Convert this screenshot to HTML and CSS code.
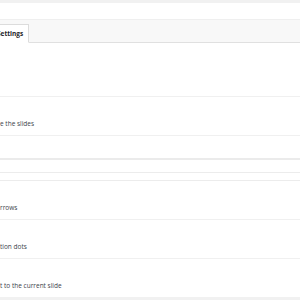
FILE: index.html
```
<!DOCTYPE html>
<html lang="en">
<head>
    <meta charset="UTF-8">
    <meta name="viewport" content="width=device-width, initial-scale=1.0">
    <title>Slider Settings</title>
    <link rel="stylesheet" href="styles.css">
</head>
<body>
    <div class="wrap">
        <div class="panel">
            <div class="panel-head"></div>

            <div class="tabs">
                <span class="tab active">Settings</span>
            </div>

            <div class="row row-tall"></div>

            <div class="row">
                <span class="label">e the slides</span>
            </div>

            <div class="row row-short"></div>

            <div class="section-gap"></div>
            <div class="section-head"></div>

            <div class="row">
                <span class="label">rrows</span>
            </div>

            <div class="row">
                <span class="label">tion dots</span>
            </div>

            <div class="row row-last">
                <span class="label">t to the current slide</span>
            </div>
        </div>
    </div>
</body>
</html>
```

FILE: styles.css
```
* {
    margin: 0;
    padding: 0;
    box-sizing: border-box;
}

body {
    font-family: "Open Sans", "Liberation Sans", sans-serif;
    font-size: 6.5px;
    line-height: 10px;
    color: #3c434a;
    background: #f1f1f1;
}

.wrap {
    height: 300px;
    padding-top: 3px;
    overflow: hidden;
}

.panel {
    background: #fff;
}

.panel-head {
    height: 16px;
}

.tabs {
    display: flex;
    align-items: flex-end;
    height: 24px;
    background: #f8f8f8;
    border-top: 1px solid #efefef;
    border-bottom: 1px solid #e0e0e0;
}

.tab {
    margin-left: -9px;
    margin-bottom: -1px;
    height: 19px;
    padding: 4px 5px 0 5px;
    font-weight: 700;
    color: #1d2327;
    background: #fff;
    border: 1px solid #dcdcdc;
    border-bottom-color: #fff;
}

.row {
    height: 39px;
    padding-top: 22px;
    border-bottom: 1px solid #f0f0f0;
    white-space: nowrap;
}

.row-tall {
    height: 54px;
}

.row-short {
    height: 22px;
    border-bottom: 2px solid #ebebeb;
}

.section-gap {
    height: 13px;
    border-bottom: 1px solid #ececec;
}

.section-head {
    height: 8px;
    border-bottom: 1px solid #ececec;
}

.row-last {
    border-bottom: none;
    height: 38px;
}

.label {
    display: inline-block;
}
```
